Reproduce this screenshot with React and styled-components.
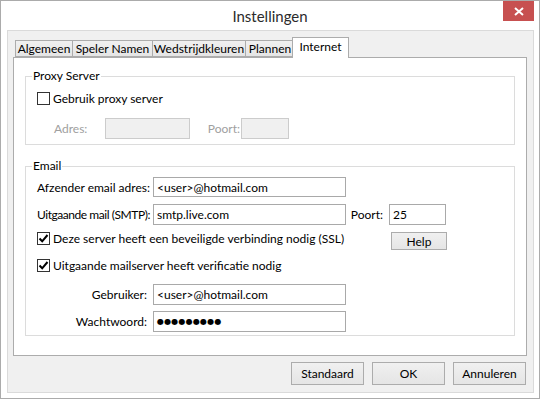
import React from "react";
import styled, { createGlobalStyle } from "styled-components";

const Global = createGlobalStyle`
  html, body { margin: 0; padding: 0; background: #fff; }
  body { font-family: Lato, "Liberation Sans", sans-serif; font-size: 12px; color: #000; }
  * { box-sizing: border-box; }
`;

const Window = styled.div`
  width: 540px;
  height: 399px;
  border: 1px solid #ababab;
  background: #fff;
  display: flex;
  flex-direction: column;
`;

const TitleBar = styled.div`
  height: 29px;
  display: grid;
  grid-template-columns: 1fr auto 1fr;
  align-items: start;
`;

const Title = styled.div`
  grid-column: 2;
  font-size: 15px;
  line-height: 30px;
  color: #2b2b2b;
`;

const CloseBtn = styled.div`
  grid-column: 3;
  justify-self: end;
  margin-right: 5px;
  width: 31px;
  height: 20px;
  background: #c75050;
  display: flex;
  align-items: center;
  justify-content: center;
`;

const Client = styled.div`
  flex: 1;
  margin: 0 5px 5px 6px;
  border: 1px solid #dadada;
  background: #f0f0f0;
  display: flex;
  flex-direction: column;
  padding: 5px 5px 0 5px;
`;

const TabRow = styled.div`
  display: flex;
  align-items: flex-end;
  height: 21px;
  padding-left: 2px;
  position: relative;
  z-index: 1;
`;

const Tab = styled.div`
  width: ${(p) => p.$w}px;
  height: ${(p) => (p.$active ? 21 : 17)}px;
  margin: ${(p) => (p.$active ? "0 -2px -1px -2px" : "0 -1px 0 0")};
  border: 1px solid #acacac;
  border-bottom: ${(p) => (p.$active ? "none" : "1px solid #acacac")};
  background: ${(p) => (p.$active ? "#fff" : "linear-gradient(#f0f0f0, #e5e5e5)")};
  display: flex;
  align-items: center;
  justify-content: center;
  padding-bottom: ${(p) => (p.$active ? 3 : 0)}px;
  position: relative;
  z-index: ${(p) => (p.$active ? 2 : 1)};
  white-space: nowrap;
`;

const Panel = styled.div`
  height: 299px;
  margin-right: 1px;
  border: 1px solid #acacac;
  background: #fff;
  padding: 10px 11px 0 11px;
  display: flex;
  flex-direction: column;
  gap: 13px;
`;

const Group = styled.fieldset`
  margin: 0;
  border: 1px solid #dcdcdc;
  padding: 0 0 0 11px;
  height: ${(p) => p.$h}px;
  display: flex;
  flex-direction: column;
  min-width: 0;
  legend {
    padding: 0 1px;
    margin-left: -5px;
    line-height: 16px;
  }
`;

const CheckRow = styled.label`
  display: flex;
  align-items: center;
  height: 13px;
  gap: 3px;
  margin-top: ${(p) => p.$mt || 0}px;
  white-space: nowrap;
`;

const Box = styled.span`
  width: 13px;
  height: 13px;
  border: 1px solid #333;
  background: #fff;
  display: flex;
  align-items: center;
  justify-content: center;
  flex: none;
`;

const FieldRow = styled.div`
  display: flex;
  align-items: ${(p) => p.$align || "center"};
  height: ${(p) => p.$h || 21}px;
  margin-top: ${(p) => p.$mt || 0}px;
`;

const Label = styled.span`
  width: ${(p) => p.$w}px;
  flex: none;
  text-align: ${(p) => (p.$left ? "left" : "right")};
  padding-right: ${(p) => (p.$pr !== undefined ? p.$pr : 6)}px;
  padding-left: ${(p) => p.$pl || 0}px;
  color: ${(p) => (p.$disabled ? "#a0a0a0" : "#000")};
  letter-spacing: ${(p) => (p.$tight ? "-0.45px" : "normal")};
  white-space: nowrap;
`;

const Input = styled.div`
  width: ${(p) => p.$w}px;
  height: ${(p) => p.$h || 21}px;
  flex: none;
  border: 1px solid ${(p) => (p.$disabled ? "#cccccc" : "#a9a9a9")};
  background: ${(p) => (p.$disabled ? "#f0f0f0" : "#fff")};
  padding: 0 3px;
  display: flex;
  align-items: center;
  white-space: nowrap;
`;

const Dots = styled.span`
  font-family: "DejaVu Sans", sans-serif;
  font-size: 8px;
  letter-spacing: 0.2px;
`;

const SmallButton = styled.div`
  width: 56px;
  height: 18px;
  border: 1px solid #acacac;
  background: linear-gradient(#f0f0f0, #e5e5e5);
  display: flex;
  align-items: center;
  justify-content: center;
  margin-left: auto;
  margin-right: 67px;
`;

const ButtonBar = styled.div`
  display: flex;
  justify-content: flex-end;
  gap: 8px;
  padding: 6px 2px 0 0;
`;

const Button = styled.div`
  width: 73px;
  height: 23px;
  border: 1px solid #acacac;
  background: linear-gradient(#f0f0f0, #e5e5e5);
  display: flex;
  align-items: center;
  justify-content: center;
`;

const Check = () => (
  <svg width="11" height="11" viewBox="0 0 11 11">
    <path d="M1.5 5.5 L4.2 8.3 L9.5 2" fill="none" stroke="#000" strokeWidth="2" />
  </svg>
);

export default function App() {
  return (
    <>
      <Global />
      <Window>
        <TitleBar>
          <Title>Instellingen</Title>
          <CloseBtn>
            <svg width="10" height="9" viewBox="0 0 10 9">
              <path d="M1 1 L9 8 M9 1 L1 8" stroke="#fff" strokeWidth="2" />
            </svg>
          </CloseBtn>
        </TitleBar>
        <Client>
          <TabRow>
            <Tab $w={58}>Algemeen</Tab>
            <Tab $w={81}>Speler Namen</Tab>
            <Tab $w={94}>Wedstrijdkleuren</Tab>
            <Tab $w={50}>Plannen</Tab>
            <Tab $w={57} $active>Internet</Tab>
          </TabRow>
          <Panel>
            <Group $h={77}>
              <legend>Proxy Server</legend>
              <CheckRow $mt={8}>
                <Box />
                Gebruik proxy server
              </CheckRow>
              <FieldRow $mt={13}>
                <Label $w={68} $left $pl={17} $pr={0} $disabled>Adres:</Label>
                <Input $w={85} $disabled />
                <Label $w={51} $pr={1} $disabled>Poort:</Label>
                <Input $w={48} $disabled />
              </FieldRow>
            </Group>
            <Group $h={178}>
              <legend>Email</legend>
              <FieldRow $h={20} $mt={3}>
                <Label $w={116}>Afzender email adres:</Label>
                <Input $w={193} $h={20}>&lt;user&gt;@hotmail.com</Input>
              </FieldRow>
              <FieldRow $mt={7}>
                <Label $w={116} $pr={5} $tight>Uitgaande mail (SMTP):</Label>
                <Input $w={193}>smtp.live.com</Input>
                <Label $w={43}>Poort:</Label>
                <Input $w={57}>25</Input>
              </FieldRow>
              <FieldRow $mt={7} $h={18} $align="flex-start">
                <CheckRow>
                  <Box><Check /></Box>
                  Deze server heeft een beveiligde verbinding nodig (SSL)
                </CheckRow>
                <SmallButton>Help</SmallButton>
              </FieldRow>
              <CheckRow $mt={9}>
                <Box><Check /></Box>
                Uitgaande mailserver heeft verificatie nodig
              </CheckRow>
              <FieldRow $mt={12}>
                <Label $w={116}>Gebruiker:</Label>
                <Input $w={193}>&lt;user&gt;@hotmail.com</Input>
              </FieldRow>
              <FieldRow $mt={6}>
                <Label $w={116}>Wachtwoord:</Label>
                <Input $w={193}><Dots>●●●●●●●●●</Dots></Input>
              </FieldRow>
            </Group>
          </Panel>
          <ButtonBar>
            <Button>Standaard</Button>
            <Button>OK</Button>
            <Button>Annuleren</Button>
          </ButtonBar>
        </Client>
      </Window>
    </>
  );
}
